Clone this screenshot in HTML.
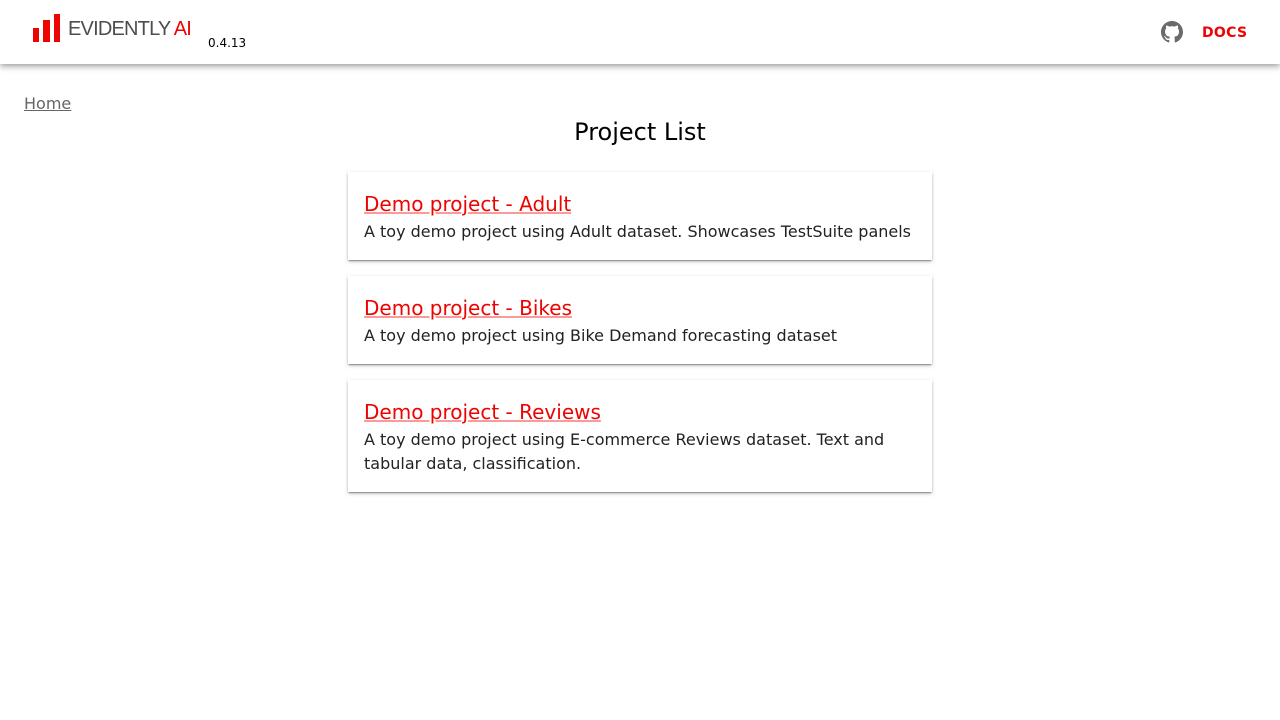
<!DOCTYPE html>
<html><head><meta charset="utf-8"><style>
body{margin:0;font-family:"DejaVu Sans","Liberation Sans",sans-serif;background:#fff;width:1280px;height:720px;overflow:hidden}
.hdr{position:absolute;left:0;top:0;width:1280px;height:64px;background:#fff;box-shadow:0 2px 4px -1px rgba(0,0,0,.2),0 4px 5px 0 rgba(0,0,0,.14),0 1px 10px 0 rgba(0,0,0,.12)}
.bar{position:absolute;background:#ed0400}
.logo{position:absolute;left:68px;top:15px;font-family:"Liberation Sans",sans-serif;font-size:20px;color:#4d4d4d;letter-spacing:-0.8px;line-height:28px;font-weight:500}
.ver{position:absolute;left:208px;top:36px;font-size:12px;color:#000}
.docs{position:absolute;left:1202px;top:25px;font-size:14px;font-weight:bold;color:#ed0400;letter-spacing:.3px}
.home{position:absolute;left:24px;top:94px;font-size:16px;color:#666;text-decoration:underline}
h1{position:absolute;left:0;width:1280px;top:118px;margin:0;text-align:center;font-weight:normal;font-size:24px;color:#000}
.card{position:absolute;left:348px;width:552px;padding:16px;background:#fff;box-shadow:0 2px 1px -1px rgba(0,0,0,.2),0 1px 1px 0 rgba(0,0,0,.14),0 1px 3px 0 rgba(0,0,0,.12),0 2px 4px rgba(0,0,0,.15)}
.card a{display:block;font-size:20px;color:#ed0400;text-decoration:underline;text-decoration-color:rgba(237,4,0,.4);line-height:32px;margin-top:0}
.card p{margin:0;font-size:16px;color:#222;line-height:24px}
</style></head><body>
<div class="hdr">
<div class="bar" style="left:33px;top:28px;width:6px;height:14px"></div>
<div class="bar" style="left:43px;top:20px;width:7px;height:22px"></div>
<div class="bar" style="left:54px;top:14px;width:6px;height:28px"></div>
<div class="logo">EVIDENTLY <span style="color:#ed0400">AI</span></div>
<div class="ver">0.4.13</div>
<svg style="position:absolute;left:1161px;top:21px" width="22" height="22" viewBox="0 0 16 16"><path fill="#6b6b6b" d="M8 0C3.58 0 0 3.58 0 8c0 3.54 2.29 6.530 5.47 7.59.4.07.55-.17.55-.38 0-.19-.01-.82-.01-1.49-2.01.37-2.530-.49-2.69-.94-.09-.23-.48-.94-.82-1.13-.28-.15-.68-.52-.01-.53.63-.01 1.08.58 1.23.82.72 1.21 1.87.87 2.33.66.07-.52.28-.87.51-1.070-1.78-.2-3.64-.89-3.64-3.95 0-.87.31-1.59.82-2.15-.08-.2-.36-1.02.08-2.12 0 0 .67-.21 2.2.82.64-.18 1.32-.27 2-.27.68 0 1.36.09 2 .27 1.53-1.04 2.2-.82 2.2-.82.44 1.1.16 1.92.08 2.12.51.56.82 1.27.82 2.15 0 3.07-1.87 3.75-3.65 3.95.29.25.54.73.54 1.48 0 1.07-.01 1.93-.01 2.2 0 .21.15.46.55.38A8.013 8.013 0 0016 8c0-4.42-3.58-8-8-8z"/></svg>
<div class="docs">DOCS</div>
</div>
<div class="home">Home</div>
<h1>Project List</h1>
<div class="card" style="top:172px;height:56px"><a>Demo project - Adult</a><p>A toy demo project using Adult dataset. Showcases TestSuite panels</p></div>
<div class="card" style="top:276px;height:56px"><a>Demo project - Bikes</a><p>A toy demo project using Bike Demand forecasting dataset</p></div>
<div class="card" style="top:380px;height:80px"><a>Demo project - Reviews</a><p>A toy demo project using E-commerce Reviews dataset. Text and tabular data, classification.</p></div>
</body></html>
